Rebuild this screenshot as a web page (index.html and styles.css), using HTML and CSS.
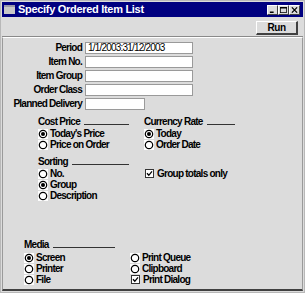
FILE: index.html
```html
<!DOCTYPE html>
<html>
<head>
<meta charset="utf-8">
<link rel="stylesheet" href="styles.css">
</head>
<body>
<div class="window">
  <div class="titlebar">
    <span class="ticon"></span>
    <span class="title">Specify Ordered Item List</span>
    <div class="wbtns">
      <span class="wb"><svg width="9" height="8" viewBox="0 0 9 8"><rect x="1" y="6" width="5" height="2" fill="#000"/></svg></span>
      <span class="wb"><svg width="9" height="8" viewBox="0 0 9 8"><rect x="0.5" y="0.5" width="8" height="7" fill="none" stroke="#000"/><rect x="0" y="0" width="9" height="2" fill="#000"/></svg></span>
      <span class="wb close"><svg width="9" height="8" viewBox="0 0 9 8"><path d="M1 0.5 L8 7.5 M8 0.5 L1 7.5" stroke="#000" stroke-width="1.6"/></svg></span>
    </div>
  </div>
  <div class="toolbar">
    <button class="run">Run</button>
  </div>
  <div class="content">
    <div class="fields">
      <label>Period</label><span class="input">1/1/2003:31/12/2003</span>
      <label>Item No.</label><span class="input"></span>
      <label>Item Group</label><span class="input"></span>
      <label>Order Class</label><span class="input"></span>
      <label>Planned Delivery</label><span class="input short"></span>
    </div>

    <div class="opts first">
      <div class="col">
        <div class="gl"><span>Cost Price</span><span class="rule"></span></div>
        <div class="row"><span class="rb on"><svg width="10" height="10" viewBox="0 0 10 10"><circle cx="5" cy="5" r="3.7" fill="#fff" stroke="#000" stroke-width="1.2"/><circle cx="5" cy="5" r="2" fill="#000"/></svg></span>Today's Price</div>
        <div class="row"><span class="rb"><svg width="10" height="10" viewBox="0 0 10 10"><circle cx="5" cy="5" r="3.7" fill="#fff" stroke="#000" stroke-width="1.2"/></svg></span>Price on Order</div>
      </div>
      <div class="col">
        <div class="gl"><span>Currency Rate</span><span class="rule"></span></div>
        <div class="row"><span class="rb on"><svg width="10" height="10" viewBox="0 0 10 10"><circle cx="5" cy="5" r="3.7" fill="#fff" stroke="#000" stroke-width="1.2"/><circle cx="5" cy="5" r="2" fill="#000"/></svg></span>Today</div>
        <div class="row"><span class="rb"><svg width="10" height="10" viewBox="0 0 10 10"><circle cx="5" cy="5" r="3.7" fill="#fff" stroke="#000" stroke-width="1.2"/></svg></span>Order Date</div>
      </div>
    </div>

    <div class="opts second">
      <div class="col">
        <div class="gl"><span>Sorting</span><span class="rule"></span></div>
        <div class="row"><span class="rb"><svg width="10" height="10" viewBox="0 0 10 10"><circle cx="5" cy="5" r="3.7" fill="#fff" stroke="#000" stroke-width="1.2"/></svg></span>No.</div>
        <div class="row"><span class="rb on"><svg width="10" height="10" viewBox="0 0 10 10"><circle cx="5" cy="5" r="3.7" fill="#fff" stroke="#000" stroke-width="1.2"/><circle cx="5" cy="5" r="2" fill="#000"/></svg></span>Group</div>
        <div class="row"><span class="rb"><svg width="10" height="10" viewBox="0 0 10 10"><circle cx="5" cy="5" r="3.7" fill="#fff" stroke="#000" stroke-width="1.2"/></svg></span>Description</div>
      </div>
      <div class="col">
        <div class="gl blank"></div>
        <div class="row"><span class="cb"><svg width="9" height="9" viewBox="0 0 9 9"><rect x="0.5" y="0.5" width="8" height="8" fill="#fff" stroke="#333"/><path d="M2 4.3 L3.8 6.3 L7 2.3" fill="none" stroke="#000" stroke-width="1.3"/></svg></span>Group totals only</div>
      </div>
    </div>

    <div class="opts media">
      <div class="col">
        <div class="gl"><span>Media</span><span class="rule"></span></div>
        <div class="row"><span class="rb on"><svg width="10" height="10" viewBox="0 0 10 10"><circle cx="5" cy="5" r="3.7" fill="#fff" stroke="#000" stroke-width="1.2"/><circle cx="5" cy="5" r="2" fill="#000"/></svg></span>Screen</div>
        <div class="row"><span class="rb"><svg width="10" height="10" viewBox="0 0 10 10"><circle cx="5" cy="5" r="3.7" fill="#fff" stroke="#000" stroke-width="1.2"/></svg></span>Printer</div>
        <div class="row"><span class="rb"><svg width="10" height="10" viewBox="0 0 10 10"><circle cx="5" cy="5" r="3.7" fill="#fff" stroke="#000" stroke-width="1.2"/></svg></span>File</div>
      </div>
      <div class="col">
        <div class="gl blank"></div>
        <div class="row"><span class="rb"><svg width="10" height="10" viewBox="0 0 10 10"><circle cx="5" cy="5" r="3.7" fill="#fff" stroke="#000" stroke-width="1.2"/></svg></span>Print Queue</div>
        <div class="row"><span class="rb"><svg width="10" height="10" viewBox="0 0 10 10"><circle cx="5" cy="5" r="3.7" fill="#fff" stroke="#000" stroke-width="1.2"/></svg></span>Clipboard</div>
        <div class="row"><span class="cb"><svg width="9" height="9" viewBox="0 0 9 9"><rect x="0.5" y="0.5" width="8" height="8" fill="#fff" stroke="#333"/><path d="M2 4.3 L3.8 6.3 L7 2.3" fill="none" stroke="#000" stroke-width="1.3"/></svg></span>Print Dialog</div>
      </div>
    </div>
  </div>
</div>
</body>
</html>
```

FILE: styles.css
```css
html, body {
  margin: 0;
  padding: 0;
  background: #dcdcdc;
}
.window {
  width: 305px;
  height: 293px;
  box-sizing: border-box;
  border: 1px solid #b8b8b8;
  padding: 1px;
  background: #dcdcdc;
  display: flex;
  flex-direction: column;
  font-family: "Liberation Sans", Arial, sans-serif;
  font-size: 10px;
  letter-spacing: -0.75px;
  font-weight: bold;
  color: #000;
}
.titlebar {
  height: 15px;
  background: #000080;
  display: flex;
  align-items: center;
  padding: 0 3px 0 2px;
}
.ticon {
  width: 11px;
  height: 9px;
  background: #c8c8c8;
  border-top: 2px solid #9a9aa8;
  box-sizing: border-box;
  margin-right: 3px;
}
.title {
  color: #fff;
  font-size: 11px;
  letter-spacing: -0.3px;
  line-height: 15px;
  flex: 1;
  white-space: nowrap;
}
.wbtns {
  display: flex;
  gap: 0;
}
.wb {
  width: 11px;
  height: 10px;
  background: #dcdcdc;
  box-sizing: border-box;
  border-top: 1px solid #fff;
  border-left: 1px solid #fff;
  border-right: 1px solid #404040;
  border-bottom: 1px solid #404040;
  display: flex;
  align-items: center;
  justify-content: center;
}
.wb svg { display: block; width: 7px; height: 6px; }
.toolbar {
  height: 19px;
  border-bottom: 1px solid #8a8a8a;
  display: flex;
  justify-content: flex-end;
  align-items: flex-start;
  padding-right: 5px;
}
.run {
  margin-top: 4px;
  width: 42px;
  height: 14px;
  padding: 0;
  background: #dcdcdc;
  font-family: inherit;
  font-weight: bold;
  font-size: 10px;
  letter-spacing: -0.4px;
  line-height: 10px;
  color: #000;
  border-top: 1px solid #fff;
  border-left: 1px solid #fff;
  border-right: 2px solid #404040;
  border-bottom: 2px solid #404040;
}
.content {
  flex: 1;
  border-top: 1px solid #fff;
  border-left: 1px solid #9a9a9a;
  border-right: 1px solid #9a9a9a;
  border-bottom: 2px solid #404040;
  padding-top: 4px;
}
.fields {
  display: grid;
  grid-template-columns: 79px auto;
  column-gap: 3px;
  row-gap: 2px;
  justify-items: start;
}
.fields label {
  justify-self: end;
  line-height: 12px;
  white-space: nowrap;
}
.input {
  width: 108px;
  height: 12px;
  box-sizing: border-box;
  background: #fff;
  border: 1px solid #9a9a9a;
  font-weight: normal;
  letter-spacing: -0.8px;
  line-height: 10px;
  padding-left: 2px;
  white-space: nowrap;
}
.input.short { width: 60px; }
.opts {
  display: grid;
  grid-template-columns: 91px 91px;
  column-gap: 15px;
  padding-left: 35px;
}
.opts.first { margin-top: 5px; }
.opts.second { margin-top: 5px; }
.opts.media { margin-top: 37px; padding-left: 21px; }
.gl {
  display: flex;
  align-items: flex-end;
  height: 13px;
  line-height: 13px;
  white-space: nowrap;
}
.media .gl { margin-bottom: 1px; }
.rule {
  flex: 1;
  height: 1px;
  background: #333;
  margin: 0 0 3px 4px;
}
.row {
  display: flex;
  align-items: center;
  height: 11px;
  line-height: 11px;
  white-space: nowrap;
}
.rb {
  width: 10px;
  height: 10px;
  background: #fff;
  margin-right: 2px;
  display: block;
}
.rb svg { display: block; }
.cb {
  width: 10px;
  height: 10px;
  margin-right: 3px;
  display: flex;
  align-items: center;
  justify-content: center;
}
.cb svg { display: block; }
```
